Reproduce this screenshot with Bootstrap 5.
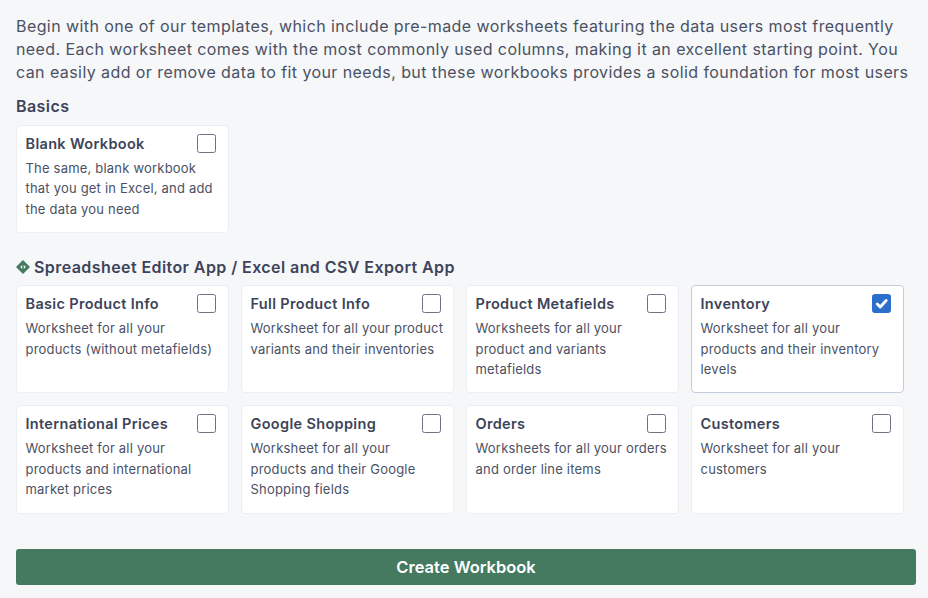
<!DOCTYPE html>
<html lang="en">
<head>
    <meta charset="UTF-8">
    <title>Create Workbook</title>
    <link href="https://cdn.jsdelivr.net/npm/bootstrap@5.3.0/dist/css/bootstrap.min.css" rel="stylesheet">
    <style>
        body {
            font-family: Inter, "Liberation Sans", sans-serif;
            background: #f6f7f9;
            color: #3d4459;
            overflow: hidden;
        }
        .page-wrap {
            padding: 15px 12px 0 16px;
        }
        .intro-text {
            font-size: 16px;
            line-height: 23px;
            letter-spacing: .42px;
            margin-bottom: 10px;
            color: #4a5164;
        }
        .group-title {
            font-size: 16px;
            line-height: 24px;
            letter-spacing: .42px;
            font-weight: 600;
            margin-bottom: 6px;
            color: #3d4459;
        }
        .group-title svg {
            margin-right: 4px;
            vertical-align: -1px;
        }
        .basics-title {
            margin-bottom: 7px;
        }
        .tpl-grid {
            display: grid;
            grid-template-columns: repeat(4, 213px);
            gap: 12px;
        }
        .basics-grid {
            margin-bottom: 22px;
        }
        .basics-grid .tpl-card {
            min-height: 107px;
        }
        .tpl-card {
            background: #fff;
            border: 1px solid #eceef2;
            border-radius: 4px;
            padding: 8px 12px 13px 8.5px;
            min-height: 108px;
        }
        .tpl-card.is-checked {
            border-color: #c3cedd;
        }
        .tpl-name {
            font-size: 14.5px;
            line-height: 20px;
            letter-spacing: .33px;
            font-weight: 600;
            color: #3d4459;
        }
        .tpl-desc {
            font-size: 13px;
            line-height: 20.4px;
            letter-spacing: .2px;
            margin-top: 4px;
            margin-right: -4px;
            color: #4a5164;
        }
        .tpl-card .form-check-input {
            width: 19px;
            height: 19px;
            margin: 0;
            border: 1px solid #6b7385;
            border-radius: 2.5px;
            flex-shrink: 0;
        }
        .tpl-card .form-check-input:checked {
            background-color: #2c6ecb;
            border-color: #2c6ecb;
            background-image: url("data:image/svg+xml,%3csvg xmlns='http://www.w3.org/2000/svg' viewBox='0 0 20 20'%3e%3cpath fill='none' stroke='%23fff' stroke-linecap='round' stroke-linejoin='round' stroke-width='3.4' d='m5 10.500 3.500 3.500 7-7.500'/%3e%3c/svg%3e");
        }
        .create-btn {
            background: #457a60;
            border: 0;
            color: #fff;
            font-size: 16.5px;
            font-weight: 600;
            height: 36px;
            line-height: 36px;
            padding: 0;
            border-radius: 3px;
            width: 900px;
            margin-top: 35px;
            display: block;
        }
        .create-btn:hover {
            background: #457a60;
            color: #fff;
        }
    </style>
</head>
<body>
    <div class="page-wrap">
        <p class="intro-text">Begin with one of our templates, which include pre-made worksheets featuring the data users most frequently need. Each worksheet comes with the most commonly used columns, making it an excellent starting point. You can easily add or remove data to fit your needs, but these workbooks provides a solid foundation for most users</p>

        <div class="group-title basics-title">Basics</div>
        <div class="tpl-grid basics-grid">
            <div class="tpl-card">
                <div class="d-flex justify-content-between align-items-start">
                    <span class="tpl-name">Blank Workbook</span>
                    <input class="form-check-input" type="checkbox" aria-label="Blank Workbook">
                </div>
                <div class="tpl-desc">The same, blank workbook that you get in Excel, and add the data you need</div>
            </div>
        </div>

        <div class="group-title">
            <svg width="14" height="14" viewBox="0 0 14 14"><path fill="#457a60" d="M7 0l7 7-7 7-7-7z"/><path fill="#fff" d="M6.200 5v4L4.200 7zM7.800 5l2 2-2 2z"/></svg>Spreadsheet Editor App / Excel and CSV Export App
        </div>
        <div class="tpl-grid">
            <div class="tpl-card">
                <div class="d-flex justify-content-between align-items-start">
                    <span class="tpl-name">Basic Product Info</span>
                    <input class="form-check-input" type="checkbox" aria-label="Basic Product Info">
                </div>
                <div class="tpl-desc">Worksheet for all your products (without metafields)</div>
            </div>
            <div class="tpl-card">
                <div class="d-flex justify-content-between align-items-start">
                    <span class="tpl-name">Full Product Info</span>
                    <input class="form-check-input" type="checkbox" aria-label="Full Product Info">
                </div>
                <div class="tpl-desc">Worksheet for all your product variants and their inventories</div>
            </div>
            <div class="tpl-card">
                <div class="d-flex justify-content-between align-items-start">
                    <span class="tpl-name">Product Metafields</span>
                    <input class="form-check-input" type="checkbox" aria-label="Product Metafields">
                </div>
                <div class="tpl-desc">Worksheets for all your product and variants metafields</div>
            </div>
            <div class="tpl-card is-checked">
                <div class="d-flex justify-content-between align-items-start">
                    <span class="tpl-name">Inventory</span>
                    <input class="form-check-input" type="checkbox" aria-label="Inventory" checked>
                </div>
                <div class="tpl-desc">Worksheet for all your products and their inventory levels</div>
            </div>
            <div class="tpl-card">
                <div class="d-flex justify-content-between align-items-start">
                    <span class="tpl-name">International Prices</span>
                    <input class="form-check-input" type="checkbox" aria-label="International Prices">
                </div>
                <div class="tpl-desc">Worksheet for all your products and international market prices</div>
            </div>
            <div class="tpl-card">
                <div class="d-flex justify-content-between align-items-start">
                    <span class="tpl-name">Google Shopping</span>
                    <input class="form-check-input" type="checkbox" aria-label="Google Shopping">
                </div>
                <div class="tpl-desc">Worksheet for all your products and their Google Shopping fields</div>
            </div>
            <div class="tpl-card">
                <div class="d-flex justify-content-between align-items-start">
                    <span class="tpl-name">Orders</span>
                    <input class="form-check-input" type="checkbox" aria-label="Orders">
                </div>
                <div class="tpl-desc">Worksheets for all your orders and order line items</div>
            </div>
            <div class="tpl-card">
                <div class="d-flex justify-content-between align-items-start">
                    <span class="tpl-name">Customers</span>
                    <input class="form-check-input" type="checkbox" aria-label="Customers">
                </div>
                <div class="tpl-desc">Worksheet for all your customers</div>
            </div>
        </div>

        <button type="button" class="btn create-btn">Create Workbook</button>
    </div>

    <script src="https://cdn.jsdelivr.net/npm/bootstrap@5.3.0/dist/js/bootstrap.bundle.min.js"></script>
</body>
</html>
